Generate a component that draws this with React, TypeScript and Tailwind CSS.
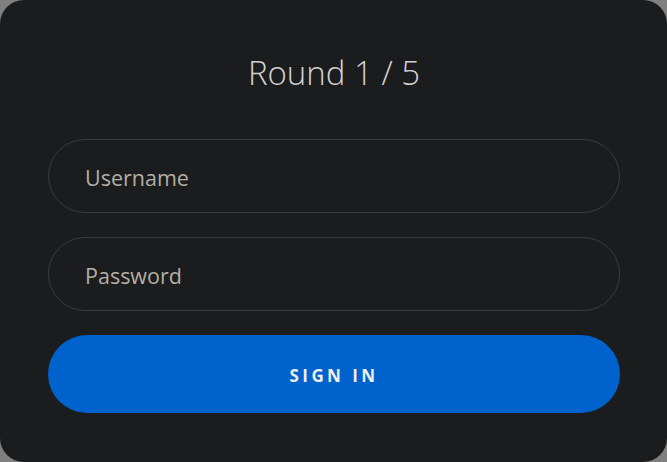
export default function App() {
  return (
    <div className="w-[667px] h-[462px] bg-[#808080]" style={{ fontFamily: '"Open Sans", "Noto Sans", sans-serif' }}>
      <div className="w-full h-full rounded-[24px] bg-[#1b1c1e] pl-12 pr-[47px] pt-[52px] pb-[49px] flex flex-col">
        {/* Title */}
        <h1 className="text-center text-[33px] leading-[42px] font-light text-[#d2d2d2]">Round 1 / 5</h1>

        {/* Form */}
        <form className="mt-[45px] flex flex-col gap-6" onSubmit={(e) => e.preventDefault()}>
          <input
            type="text"
            placeholder="Username"
            className="h-[74px] w-full rounded-full border border-[#3b3c3e] bg-transparent px-[36px] pt-[2px] text-[21.5px] text-[#d2d2d2] placeholder:text-[#b5aea6] outline-none"
          />
          <input
            type="password"
            placeholder="Password"
            className="h-[74px] w-full rounded-full border border-[#3b3c3e] bg-transparent px-[36px] pt-[2px] text-[21.5px] text-[#d2d2d2] placeholder:text-[#b5aea6] outline-none"
          />
          <button
            type="submit"
            className="h-[78px] w-full rounded-full bg-[#0062cc] pt-[3px] text-[17px] font-bold tracking-[0.2em] text-[#eeeeee]"
          >
            SIGN IN
          </button>
        </form>
      </div>
    </div>
  )
}
